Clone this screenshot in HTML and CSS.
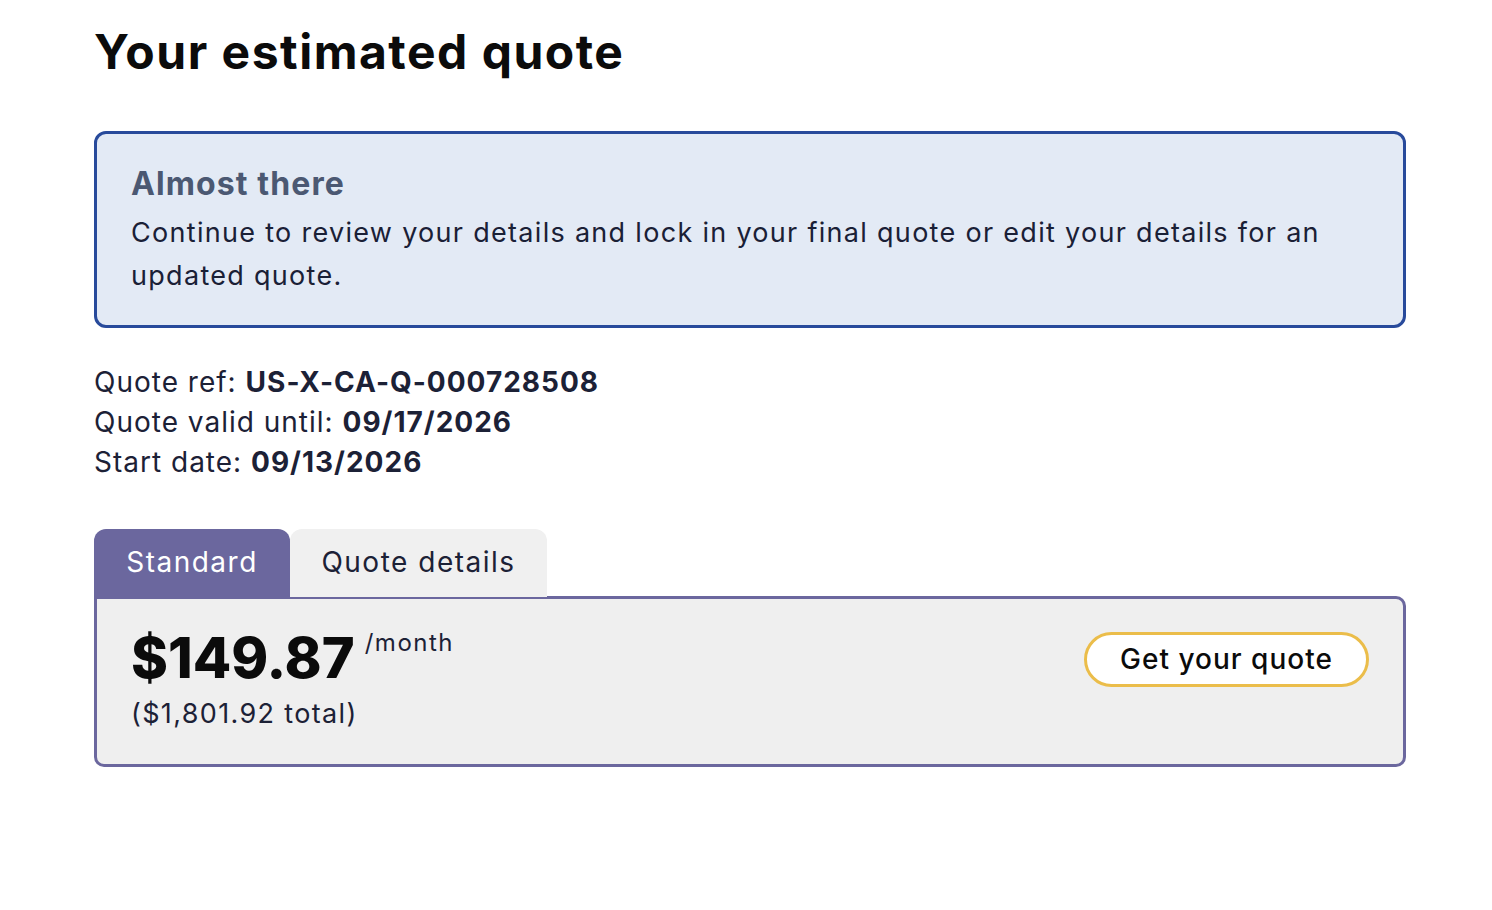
FILE: index.html
```html
<!DOCTYPE html>
<html lang="en">
<head>
<meta charset="utf-8">
<title>Your estimated quote</title>
<link rel="stylesheet" href="styles.css">
</head>
<body>
<main class="page">
  <h1 class="title">Your estimated quote</h1>
  <section class="alert">
    <h2 class="alert-title">Almost there</h2>
    <p class="alert-text">Continue to review your details and lock in your final quote or edit your details for an updated quote.</p>
  </section>
  <div class="meta">
    <div>Quote ref: <strong>US-X-CA-Q-000728508</strong></div>
    <div>Quote valid until: <strong>09/17/2026</strong></div>
    <div>Start date: <strong>09/13/2026</strong></div>
  </div>
  <div class="tabs">
    <div class="tab tab-active">Standard</div>
    <div class="tab">Quote details</div>
  </div>
  <section class="card">
    <div class="price-block">
      <div class="price-row"><span class="price">$149.87</span><span class="per">/month</span></div>
      <div class="total">($1,801.92 total)</div>
    </div>
    <button class="cta">Get your quote</button>
  </section>
</main>
</body>
</html>
```
FILE: styles.css
```css
* { box-sizing: border-box; }
body {
  margin: 0;
  background: #fff;
  font-family: Inter, "Noto Sans", sans-serif;
  color: #1c2136;
}
.page {
  width: 1312px;
  margin-left: 94px;
  padding-top: 22px;
}
.title {
  margin: 0;
  font-size: 48px;
  font-weight: 700;
  color: #0b0b0b;
  line-height: 60px;
  letter-spacing: 1.5px;
}
.alert {
  margin-top: 49px;
  border: 3px solid #284a9b;
  border-radius: 12px;
  background: #e3eaf5;
  padding: 30px 34px 34px 34px;
  height: 197px;
}
.alert-title {
  margin: 0;
  font-size: 32px;
  font-weight: 700;
  color: #4b5872;
  line-height: 40px;
  letter-spacing: 1.1px;
}
.alert-text {
  margin: 7px 0 0 0;
  font-size: 27px;
  line-height: 43px;
  color: #1a2036;
  letter-spacing: 1.3px;
}
.meta {
  margin-top: 34px;
  font-size: 28px;
  line-height: 40px;
  letter-spacing: 1px;
}
.meta strong { font-weight: 700; }
.tabs {
  display: flex;
  margin-top: 47px;
  height: 68px;
}
.tab {
  display: flex;
  align-items: center;
  justify-content: center;
  font-size: 28px;
  letter-spacing: 1.5px;
  border-radius: 12px 12px 0 0;
  background: #f0f0f0;
  color: #1c2136;
  width: 257px;
  padding-bottom: 2px;
}
.tab-active {
  background: #6b679e;
  color: #fff;
  width: 196px;
}
.card {
  margin-top: -1px;
  height: 171px;
  border: 3px solid #6b679e;
  border-radius: 0 10px 10px 10px;
  background: #efefef;
  display: flex;
  justify-content: space-between;
  align-items: flex-start;
  padding: 22px 34px 0 34px;
}
.price-row {
  display: flex;
  align-items: flex-start;
}
.price {
  font-size: 56px;
  font-weight: 800;
  color: #0b0b0b;
  line-height: 74px;
  letter-spacing: 0px;
}
.per {
  font-size: 24px;
  margin-left: 10px;
  line-height: 44px;
  letter-spacing: 1.5px;
}
.total {
  font-size: 27px;
  line-height: 36px;
  margin-top: 1px;
  letter-spacing: 1.35px;
}
.cta {
  margin-top: 11px;
  width: 285px;
  height: 55px;
  border: 3px solid #ebbd4a;
  border-radius: 28px;
  background: #fff;
  font-family: inherit;
  font-size: 28px;
  font-weight: 500;
  letter-spacing: 1px;
  color: #0b0b0b;
  padding: 0 0 2px 0;
}
```
